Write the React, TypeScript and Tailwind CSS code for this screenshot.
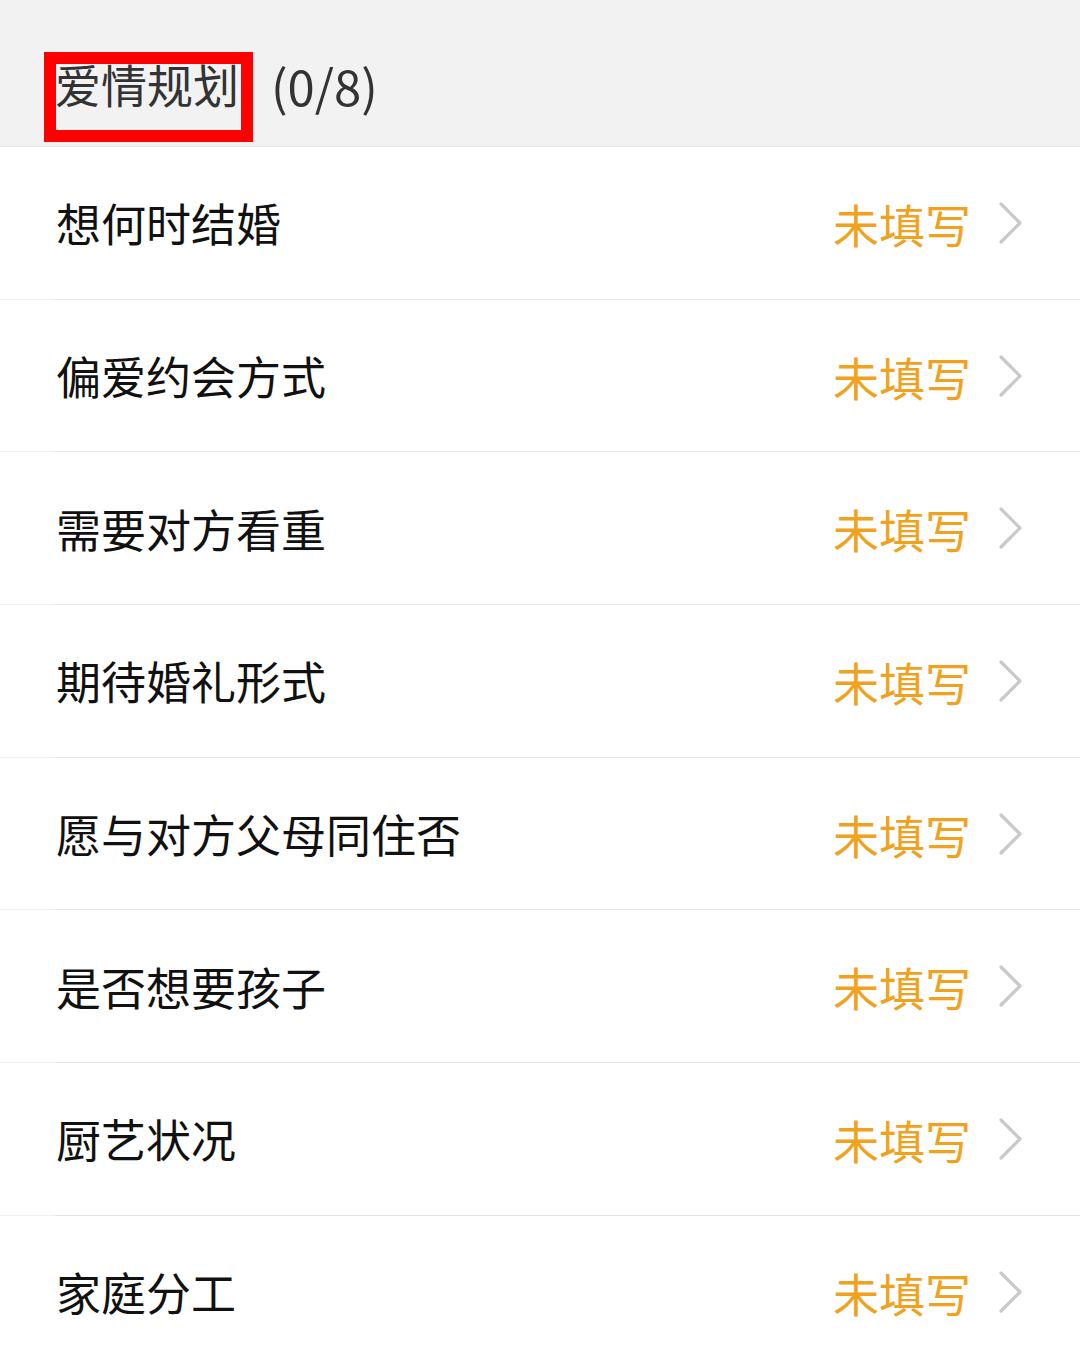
import React from "react";

const items = [
    "想何时结婚",
    "偏爱约会方式",
    "需要对方看重",
    "期待婚礼形式",
    "愿与对方父母同住否",
    "是否想要孩子",
    "厨艺状况",
    "家庭分工",
];

const Chevron = () => (
    <svg width="26" height="42" viewBox="0 0 26 42" fill="none">
        <path d="M3 2 L22 21 L3 40" stroke="#c9c9c9" strokeWidth="3.2" strokeLinecap="round" strokeLinejoin="round" />
    </svg>
);

const Row = ({ label }: { label: string }) => (
    <div className="flex flex-col">
        <div className="flex h-[151.7px] items-center pl-[56px] pr-[56px]">
            <span className="flex-1 text-[45px] leading-none text-[#111]">{label}</span>
            <span className="text-[46px] leading-none text-[#f0a21e]">未填写</span>
            <span className="ml-[27px] flex items-center">
                <Chevron />
            </span>
        </div>
        <div className="h-px bg-[#f1f1f1]">
            <div className="ml-[55px] h-px bg-[#e4e4e4]" />
        </div>
    </div>
);

export default function App() {
    return (
        <div
            className="min-h-[1364px] w-[1080px] bg-white"
            style={{ fontFamily: '"Noto Sans CJK SC", "Noto Sans", sans-serif' }}
        >
            <div className="flex h-[147px] items-center border-b border-[#e6e6e6] bg-[#f2f2f2] pl-[55px] pt-[22px]">
                <div className="relative">
                    <span className="text-[46px] leading-none text-[#333]">爱情规划</span>
                    {/* red annotation box */}
                    <div className="absolute left-[-11px] top-[-8px] h-[90px] w-[209px] border-[12px] border-[#ff0000]" />
                </div>
                <span className="ml-[32px] text-[49px] leading-none text-[#333]">(0/8)</span>
            </div>
            {items.map((label) => (
                <Row key={label} label={label} />
            ))}
        </div>
    );
}
